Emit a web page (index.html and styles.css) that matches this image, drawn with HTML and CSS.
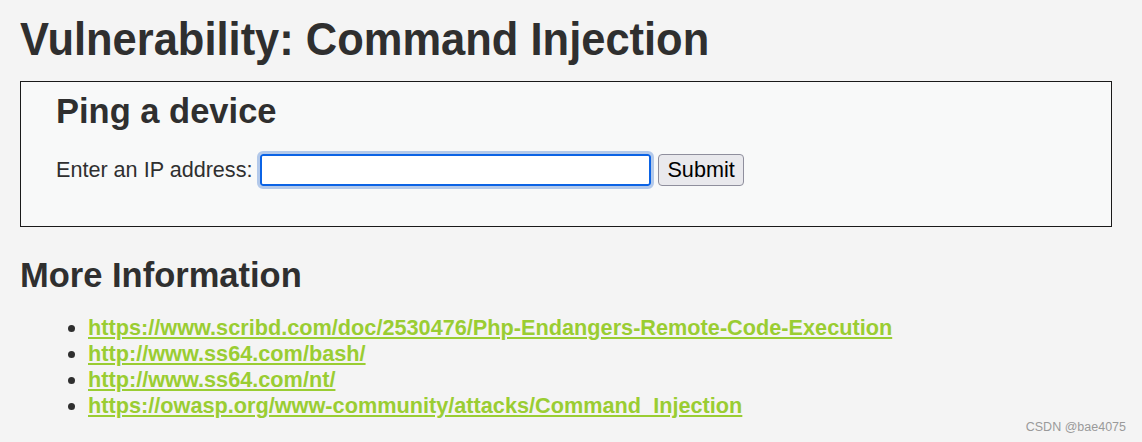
FILE: index.html
```html
<!DOCTYPE html>
<html>
<head>
<meta charset="utf-8">
<link rel="stylesheet" href="styles.css">
</head>
<body>
<div class="page">
  <h1 class="title">Vulnerability: Command Injection</h1>
  <div class="vulnerable_code_area">
    <h2 class="box-title">Ping a device</h2>
    <form class="ping-form">
      <label class="label" for="ip">Enter an IP address:</label>
      <input class="ip-input" id="ip" type="text" name="ip">
      <button class="submit" type="button">Submit</button>
    </form>
  </div>
  <h2 class="more">More Information</h2>
  <ul class="links">
    <li><a href="#">https://www.scribd.com/doc/2530476/Php-Endangers-Remote-Code-Execution</a></li>
    <li><a href="#">http://www.ss64.com/bash/</a></li>
    <li><a href="#">http://www.ss64.com/nt/</a></li>
    <li><a href="#">https://owasp.org/www-community/attacks/Command_Injection</a></li>
  </ul>
</div>
<div class="watermark">CSDN @bae4075</div>
</body>
</html>
```
FILE: styles.css
```css
html, body {
  margin: 0;
  padding: 0;
  background: #f4f4f4;
}
body {
  font-family: "Liberation Sans", Arial, sans-serif;
  color: #2f2f2f;
  width: 1142px;
  height: 442px;
  overflow: hidden;
  position: relative;
}
.page {
  padding: 11px 30px 0 20px;
}
.title {
  margin: 0;
  font-size: 47px;
  font-weight: bold;
  line-height: 56px;
  color: #2f2f2f;
  white-space: nowrap;
  transform: scaleX(0.925);
  transform-origin: left center;
}
.vulnerable_code_area {
  margin-top: 14px;
  border: 1px solid #1a1a1a;
  background: #f8f9f9;
  width: 1092px;
  height: 146px;
  box-sizing: border-box;
  padding: 9px 35px 0 35px;
}
.box-title {
  margin: 0;
  font-size: 34.5px;
  line-height: 40px;
  font-weight: bold;
  color: #2f2f2f;
}
.ping-form {
  margin-top: 23px;
  display: flex;
  align-items: center;
  font-size: 21.6px;
  color: #2f2f2f;
}
.label {
  margin-right: 0;
}
.ip-input {
  width: 391px;
  height: 32px;
  box-sizing: border-box;
  border: 2px solid #0b63e5;
  border-radius: 3px;
  background: #fff;
  outline: 3px solid #b3c9ea;
  outline-offset: 0;
  margin: 0 7px 0 8px;
  font-size: 18px;
}
.submit {
  height: 32px;
  padding: 0 8px;
  font-family: "Liberation Sans", Arial, sans-serif;
  font-size: 21.6px;
  color: #000;
  background: #e9e9ed;
  border: 1px solid #8f8f9d;
  border-radius: 4px;
}
.more {
  margin: 28px 0 0 0;
  font-size: 34.5px;
  line-height: 40px;
  font-weight: bold;
  color: #2f2f2f;
}
.links {
  margin: 20px 0 0 0;
  padding-left: 68px;
  font-size: 21.7px;
  line-height: 26px;
}
.links a {
  color: #9acd32;
  font-weight: bold;
  text-decoration: underline;
}
.links li::marker {
  color: #2f2f2f;
}
.watermark {
  position: absolute;
  right: 16px;
  bottom: 8px;
  font-size: 12.5px;
  color: #9a9a9a;
}
```
